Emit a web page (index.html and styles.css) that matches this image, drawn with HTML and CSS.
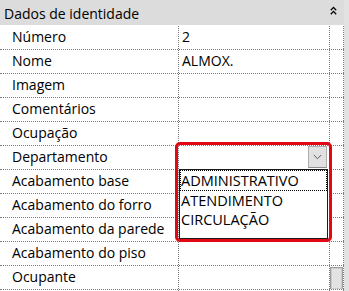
FILE: index.html
```html
<!DOCTYPE html>
<html>
<head>
<meta charset="utf-8">
<link rel="stylesheet" href="styles.css">
</head>
<body>
<div class="panel">
  <div class="main">
    <div class="header">
      <span class="title">Dados de identidade</span>
      <svg class="collapse" width="7" height="9" viewBox="0 0 7 9"><polyline points="0.8,4.2 3.5,1.4 6.2,4.2" fill="none" stroke="#000" stroke-width="1.3"/><polyline points="0.8,8.2 3.5,5.4 6.2,8.2" fill="none" stroke="#000" stroke-width="1.3"/></svg>
    </div>
    <div class="rows">
      <div class="row"><div class="label">Número</div><div class="value">2</div><div class="extra"></div></div>
      <div class="row"><div class="label">Nome</div><div class="value">ALMOX.</div><div class="extra"></div></div>
      <div class="row"><div class="label">Imagem</div><div class="value"></div><div class="extra"></div></div>
      <div class="row"><div class="label">Comentários</div><div class="value"></div><div class="extra"></div></div>
      <div class="row"><div class="label">Ocupação</div><div class="value"></div><div class="extra"></div></div>
      <div class="row"><div class="label">Departamento</div><div class="value combo"><span class="combo-btn"><svg width="9" height="6" viewBox="0 0 9 6"><polyline points="0.8,1 4.5,4.7 8.2,1" fill="none" stroke="#5a5a5a" stroke-width="1"/></svg></span></div><div class="extra"></div></div>
      <div class="row"><div class="label">Acabamento base</div><div class="value"></div><div class="extra"></div></div>
      <div class="row"><div class="label">Acabamento do forro</div><div class="value"></div><div class="extra"></div></div>
      <div class="row"><div class="label">Acabamento da parede</div><div class="value"></div><div class="extra"></div></div>
      <div class="row"><div class="label">Acabamento do piso</div><div class="value"></div><div class="extra"></div></div>
      <div class="row"><div class="label">Ocupante</div><div class="value"></div><div class="extra"><span class="thumb"></span></div></div>
      <div class="row"><div class="label"></div><div class="value"></div><div class="extra"></div></div>
    </div>
    <ul class="dropdown">
      <li class="item focused">ADMINISTRATIVO</li>
      <li class="item">ATENDIMENTO</li>
      <li class="item">CIRCULAÇÃO</li>
    </ul>
    <div class="highlight"></div>
  </div>
  <div class="strip"></div>
</div>
</body>
</html>
```

FILE: styles.css
```css
html, body {
  margin: 0;
  padding: 0;
  background: #fff;
}
body {
  font-family: "Open Sans", "Liberation Sans", sans-serif;
  font-size: 14px;
  color: #000;
}
.panel {
  display: flex;
  width: 349px;
  height: 291px;
  overflow: hidden;
}
.main {
  position: relative;
  width: 344px;
  flex: none;
}
.strip {
  flex: 1;
  background: #e2e2e2;
}
.header {
  display: flex;
  justify-content: space-between;
  align-items: flex-start;
  height: 23px;
  padding-top: 2px;
  margin-bottom: 1px;
  background: #dcdcdc;
  line-height: 23px;
}
.title {
  padding-left: 4px;
}
.collapse {
  margin-top: 4px;
  margin-right: 7px;
}
.row {
  display: flex;
  height: 23px;
  border-bottom: 1px dotted #7c7c7c;
}
.label, .value, .extra {
  height: 23px;
  line-height: 21px;
  box-sizing: border-box;
  border-right: 1px dotted #7c7c7c;
  white-space: nowrap;
  overflow: hidden;
}
.label {
  width: 179px;
  padding-left: 12px;
}
.value {
  width: 151px;
  padding-left: 3px;
}
.extra {
  width: 14px;
  position: relative;
}
.combo {
  display: flex;
  justify-content: flex-end;
  padding-right: 2px;
}
.combo-btn {
  display: flex;
  align-items: center;
  justify-content: center;
  width: 17px;
  height: 20px;
  background: #e1e1e1;
  border: 1px solid #adadad;
  border-bottom-color: #8f8f8f;
}
.thumb {
  display: block;
  box-sizing: border-box;
  width: 13px;
  height: 23px;
  margin-top: 1px;
  background: #e3e3e3;
  border: 1px solid #9e9e9e;
  box-shadow: inset 0 0 0 1px #cbcbcb;
}
.dropdown {
  position: absolute;
  left: 179px;
  top: 169px;
  width: 149px;
  height: 70px;
  box-sizing: border-box;
  margin: 0;
  padding: 0;
  list-style: none;
  background: #fff;
  border: 1px solid #1b1b1b;
  font-size: 14.5px;
}
.item {
  height: 19px;
  line-height: 19px;
  padding-left: 1px;
  white-space: nowrap;
}
.item.focused {
  height: 21px;
  line-height: 21px;
  outline: 1px dotted #000;
  outline-offset: -1px;
}
.highlight {
  position: absolute;
  left: 175px;
  top: 142px;
  width: 157px;
  height: 100px;
  box-sizing: border-box;
  border: 3px solid #e30613;
  border-radius: 5px;
}
```
